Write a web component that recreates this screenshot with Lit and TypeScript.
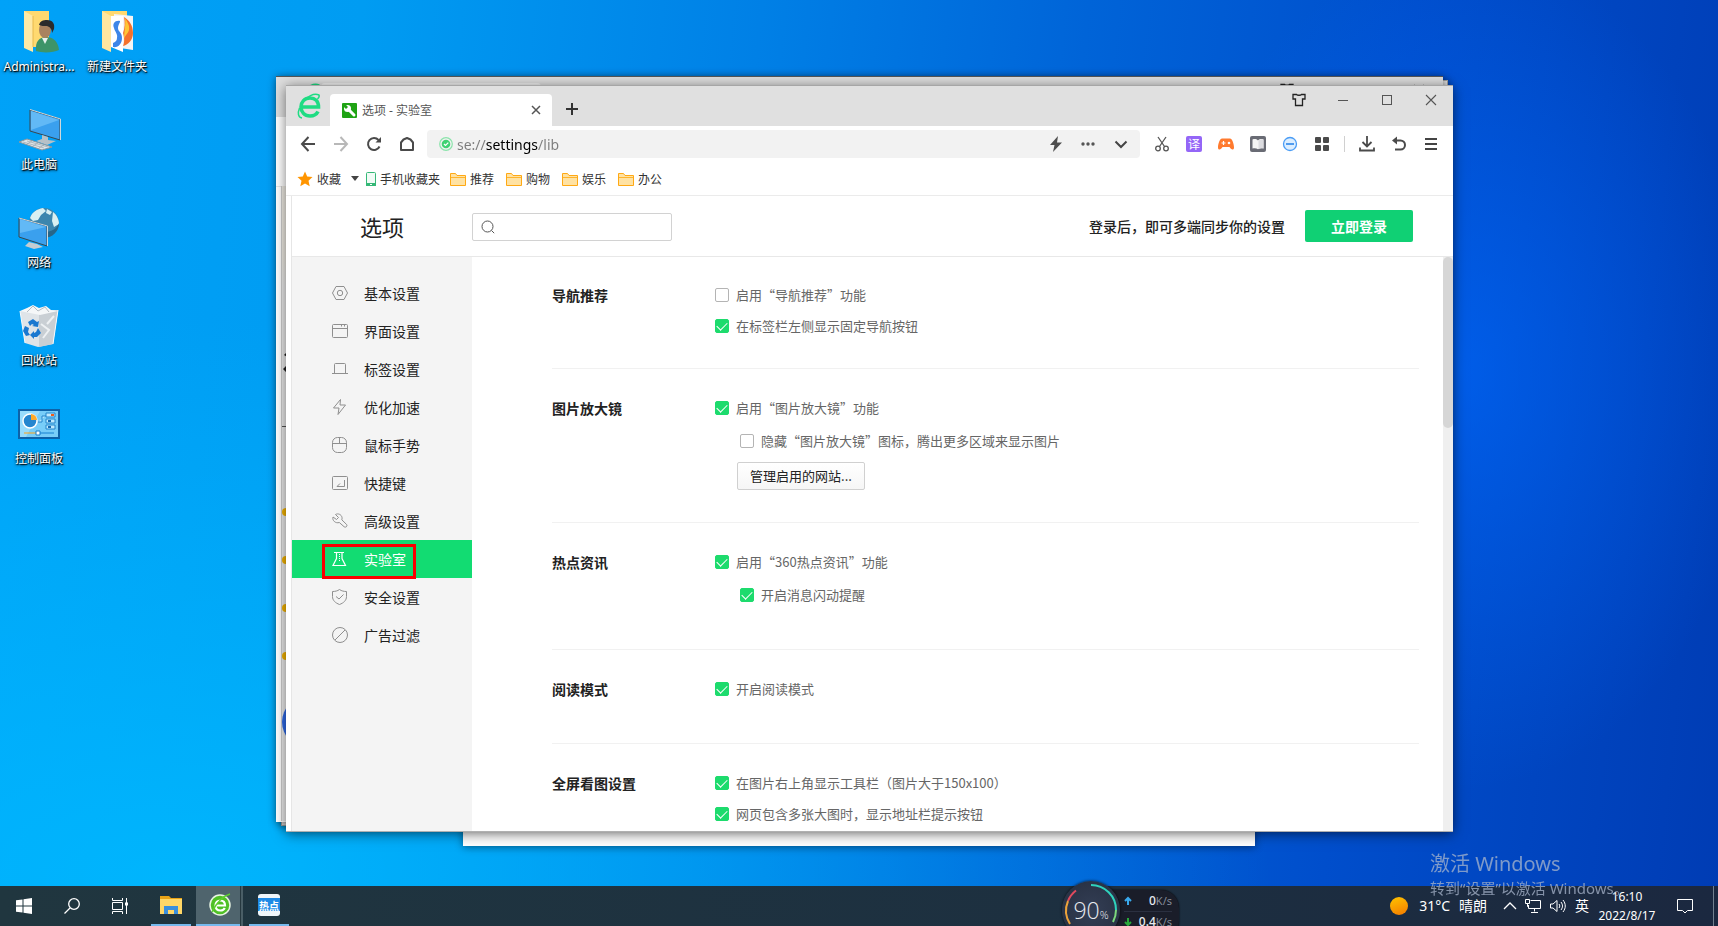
import { LitElement, html, css, svg, nothing } from "lit";
import { customElement } from "lit/decorators.js";
import { classMap } from "lit/directives/class-map.js";

const icon = (w: number, h: number, body: unknown) =>
  html`<svg width=${w} height=${h} viewBox="0 0 ${w} ${h}" fill="none" aria-hidden="true">${body}</svg>`;

/* ---------- desktop shortcuts ---------- */

const userFolder = icon(36, 44, svg`
  <path d="M3 1h25v36H3z" fill="#ffd970"/><path d="M3 1l9 5v36l-9-4z" fill="#ffe9a6"/><path d="M12 6v31" stroke="#e8b84a"/>
  <path d="M15 41c-1-9 3-14 10-14s12 4 13 13c-6 3-17 3-23 1z" fill="#3d9468"/>
  <path d="M21 28l3 6 3-6z" fill="#e8f1ee"/>
  <ellipse cx="24" cy="20" rx="6" ry="8" fill="#a9825f"/>
  <path d="M18 15c1-4 4-5 8-5 6 0 8 4 7 9l-2 4c0-4-2-6-5-7-3 0-6 0-8-1z" fill="#2b2b2c"/>`);

const appsFolder = icon(36, 44, svg`
  <path d="M3 1h25v36H3z" fill="#ffd970"/><path d="M15 4l19 2v34l-19-3z" fill="#f4f4f4"/>
  <path d="M12 6h12v36l-12-5z" fill="#fff"/>
  <path d="M21 11c-5-1-8 3-6 7 1 4 4 6 3 10 0 3-2 4-4 5v4c5 1 9-3 9-9s-4-6-4-10c0-2 1-4 2-6z" fill="#3d86e8"/>
  <path d="M25 7c5 3 9 8 9 16 0 7-5 12-10 13 2-5 1-9 0-13 2-5 2-11 1-16z" fill="#f5712c"/>
  <path d="M26 8c2 4 5 7 4 12-1 4-4 5-5 9 0-6 2-14 1-21z" fill="#ffc534"/>
  <path d="M3 1l9 5v36l-9-4z" fill="#ffe6a0"/>`);

const computer = icon(44, 44, svg`
  <path d="M13 2l30 9v21L13 23z" fill="#3aa0ee" stroke="#38474f"/><path d="M14 3l28 9L14 22z" fill="#62b9f6"/>
  <path d="M13 1.500l30.500 9.500V32" stroke="#cfd8dc" stroke-width="1"/>
  <path d="M25 27l6 2v3l8 1-9 4-11-4 6-2z" fill="#b8c1c7"/>
  <path d="M2 34l8-3 25 8-10 3z" fill="#dfe5e9" stroke="#8b979e"/><path d="M6 34l21 6M10 33l21 6M10 36l5-3M16 38l5-3M22 40l5-3" stroke="#9aa6ad" stroke-width=".7"/>`);

const network = icon(44, 44, svg`
  <circle cx="27" cy="17" r="15" fill="#3c86ae"/><path d="M13 12c2-6 7-9 13-10l3 3-5 4-3 5-5 1zM36 6c4 3 6 8 6 12l-5 3-2-6zM30 3l5 3-2 3-4-2z" fill="#d9f0f2"/>
  <path d="M27 32a15 15 0 0 0 15-15c-2 6-8 9-15 9z" fill="#26668a"/>
  <path d="M2 12l28 8v20L2 31z" fill="#3aa0ee" stroke="#38474f"/><path d="M3 13l26 8L3 27z" fill="#62b9f6"/>
  <path d="M2 12l28.500 8v20" stroke="#cfd8dc"/><path d="M12 36l8 2 6 3-9 2-9-3z" fill="#c4ccd1"/>`);

const recycle = icon(40, 44, svg`
  <path d="M1 7l38-1-5 34-15 3-13-4z" fill="#dfe4e8"/><path d="M20 10l19-4-5 34-14 3z" fill="#c9cfd4"/>
  <path d="M1 7l7-3 6-3 6 3 7-2 5 4 7 1-18 4z" fill="#f5f7f8"/><path d="M8 8l6-6 5 5 7-4 4 5" stroke="#b5bcc2"/>
  <path d="M22 20l8 6-6 8M35 12l-7 8" stroke="#eef1f3" stroke-width="2"/><path d="M1 7l5 32M39 6l-5 34" stroke="#f7fbfd"/>
  <g fill="#1a78d0"><path d="M9 18l5-3 4 3 2-1-1 6-6-1 2-1-2-1-2 2z"/><path d="M6 22l4 2-1 4 2 3-4 1-3-5z"/><path d="M19 24l3 5-4 4h-3v2l-4-4 4-4v2l2-1z"/></g>`);

const controlPanel = icon(42, 32, svg`
  <path d="M0 1h42v30H0z" fill="#0d62a8"/><path d="M2 3h38v26H2z" fill="#78cdf8"/><path d="M2 3h20L8 29H2z" fill="#98dcfc"/>
  <circle cx="12" cy="13" r="7" fill="#2486cf" stroke="#fff" stroke-width="1.500"/><path d="M13 12V6a6 6 0 0 1 6 6z" fill="#ffa928"/>
  <path d="M20 14h4V8h4M28 5h9v4h-9zM28 11h9v4h-9zM28 17h9v4h-9z" stroke="#2384cb" fill="#bfeafe"/><path d="M33 7h3" stroke="#f25c19" stroke-width="2"/><path d="M30 13h3M30 19h3" stroke="#136ab4" stroke-width="2"/>
  <path d="M6 25h13" stroke="#ffa31a" stroke-width="1"/><path d="M20 25h16" stroke="#1680d0" stroke-width="1"/><path d="M18 23h4v4h-4z" fill="#fff" stroke="#177fcb"/>`);

/* ---------- browser chrome ---------- */

const eLogo = icon(24, 26, svg`
  <path d="M4 14h17.500c0-6-3.500-9-8.500-9-5.500 0-9 4-9 9s3.500 9 9 9c4 0 6.500-1.500 8-4.500" stroke="#1fdc83" stroke-width="3.600"/>
  <path d="M5 9.500c5-6.500 12-9.500 17-7.500 .5 1 0 2.500-1.500 4M2.500 15c-2 5-1.500 9.500 2.500 10" stroke="#1fdc83" stroke-width="1.500"/>`);

const wrenchTab = icon(15, 15, svg`
  <rect width="15" height="15" rx="1" fill="#1fa314"/><path d="M6 6l6 6" stroke="#fff" stroke-width="3" stroke-linecap="round"/>
  <circle cx="5.500" cy="5.500" r="3.500" fill="#fff"/><path d="M1 3l2-2 3 3-2 2z" fill="#1fa314"/>`);

const chrome = {
  close: icon(10, 10, svg`<path d="M1 1l8 8M9 1L1 9" stroke="#555" stroke-width="1.500"/>`),
  plus: icon(12, 12, svg`<path d="M6 0v12M0 6h12" stroke="#333" stroke-width="2"/>`),
  back: icon(16, 16, svg`<path d="M8.500 1L2 8l6.500 7M2 8h13" stroke="#4a4a4a" stroke-width="2"/>`),
  forward: icon(16, 16, svg`<path d="M7.500 1L14 8l-6.500 7M14 8H1" stroke="#b8b8b8" stroke-width="2"/>`),
  reload: icon(16, 16, svg`<path d="M13.500 10.500A6 6 0 1 1 12.500 4" stroke="#4a4a4a" stroke-width="2"/><path d="M9.500 6.500H15V1z" fill="#4a4a4a"/>`),
  home: icon(16, 16, svg`<path d="M2 14V6.500L4.500 3.500 8 2l3.500 1.500L14 6.500V14z" stroke="#4a4a4a" stroke-width="2" stroke-linejoin="round"/>`),
  safe: icon(14, 14, svg`<circle cx="7" cy="7" r="6.300" stroke="#8be4ab" stroke-width="1.200"/><circle cx="7" cy="7" r="4.300" fill="#3fd272"/><path d="M5 7l1.500 1.500L9.300 5.600" stroke="#fff" stroke-width="1.200"/>`),
  bolt: icon(12, 16, svg`<path d="M8 0L0 9h4.500L3 16l9-9.500H7z" fill="#4d4d4d"/>`),
  dots: icon(14, 14, svg`<g fill="#555"><circle cx="2" cy="7" r="1.700"/><circle cx="7" cy="7" r="1.700"/><circle cx="12" cy="7" r="1.700"/></g>`),
  chevron: icon(14, 14, svg`<path d="M1.500 4.500L7 10l5.500-5.500" stroke="#444" stroke-width="2"/>`),
};

const toolIcons: [string, unknown][] = [
  ["截图", icon(16, 16, svg`<path d="M4 1l6.500 9.500M12 1L5.500 10.500" stroke="#555" stroke-width="1.300"/><circle cx="4" cy="12.500" r="2.300" stroke="#555" stroke-width="1.300"/><circle cx="12" cy="12.500" r="2.300" stroke="#555" stroke-width="1.300"/>`)],
  ["翻译", html`<span class="translate">译</span>`],
  ["游戏", icon(16, 16, svg`<path d="M4 2.500h8c2 0 4 5 4 9 0 3-3 2.500-4.500-.5h-7C3 14 0 14.500 0 11.500c0-4 2-9 4-9z" fill="#ff7a2e"/><path d="M5.500 5v4M3.500 7h4" stroke="#fff" stroke-width="1.200"/><circle cx="11" cy="7" r="1.300" fill="#fff"/>`)],
  ["阅读", icon(16, 16, svg`<rect width="16" height="16" rx="2" fill="#696b74"/><path d="M2.500 3.500c2-.8 4-.5 5.500 1 1.500-1.500 3.500-1.800 5.500-1v9c-2-.6-4-.4-5.500.7-1.500-1.100-3.500-1.300-5.500-.7z" fill="#f4f4f4"/><path d="M8.500 5v8c1.300-.8 3-1.200 5-.5v-9c-2-.7-3.700-.2-5 1.500z" fill="#dcdce0"/>`)],
  ["拦截", icon(16, 16, svg`<circle cx="8" cy="8" r="6.500" fill="#dceeff" stroke="#4a9cf5" stroke-width="1.300"/><path d="M4 8h8" stroke="#2e86ea" stroke-width="1.600"/>`)],
  ["扩展", icon(16, 16, svg`<g fill="#4a4a4a"><rect x="1" y="1" width="6" height="6" rx="1"/><rect x="9" y="1" width="6" height="6" rx="1"/><rect x="1" y="9" width="6" height="6" rx="1"/><rect x="9" y="9" width="6" height="6" rx="1"/></g>`)],
];

const endIcons: [string, unknown][] = [
  ["下载", icon(16, 16, svg`<path d="M8 0v10M3.500 6L8 10.500 12.500 6M1 11.500v3h14v-3" stroke="#4a4a4a" stroke-width="1.800"/>`)],
  ["恢复", icon(16, 16, svg`<path d="M3 4.500h6.500a4.500 4.500 0 0 1 0 9H4" stroke="#4a4a4a" stroke-width="2"/><path d="M6 .5v8L1 4.500z" fill="#4a4a4a"/>`)],
  ["菜单", icon(16, 16, svg`<path d="M2 3h12M2 8h12M2 13h12" stroke="#444" stroke-width="2"/>`)],
];

const windowIcons: [string, unknown][] = [
  ["皮肤", icon(14, 14, svg`<path d="M1 1.500h3.500c.8 1 4.200 1 5 0H13V6h-2.500v6.500h-7V6H1z" stroke="#222" stroke-width="1.300"/>`)],
  ["最小化", icon(14, 14, svg`<path d="M2 7.500h10" stroke="#555"/>`)],
  ["最大化", icon(14, 14, svg`<rect x="2.500" y="2.500" width="9" height="9" stroke="#555"/>`)],
  ["关闭", icon(14, 14, svg`<path d="M2 2l10 10M12 2L2 12" stroke="#555" stroke-width="1.100"/>`)],
];

const star = icon(16, 16, svg`<path d="M8 .5l2.200 5 5.300.5-4 3.700 1.200 5.500L8 12.400l-4.700 2.800 1.200-5.500L.5 6l5.300-.5z" fill="#ff9500"/>`);
const phone = icon(12, 16, svg`<rect x="1.500" y="1.500" width="9" height="13" rx="1" stroke="#35b877" fill="#f1fbf6"/><path d="M1 12h10v3H1z" fill="#35b877"/><path d="M5 13.500h2" stroke="#fff"/>`);
const folder = icon(16, 14, svg`<path d="M.5 1.500h5l1.500 2h8.500v10H.5z" fill="#ffe2a3" stroke="#ffa914"/><path d="M1 5.500h14" stroke="#ffb52e"/>`);
const magnifier = icon(14, 14, svg`<circle cx="6.500" cy="6.500" r="5.500" stroke="#555"/><path d="M10.500 10.500l2.700 2.700" stroke="#555"/>`);

/* ---------- settings menu ---------- */

const g = "#8f8f8f";
const menu: { label: string; glyph: unknown; active?: boolean }[] = [
  { label: "基本设置", glyph: icon(18, 18, svg`<path d="M5 2.500h8L16.500 9 13 15.500H5L1.500 9z" stroke=${g} stroke-linejoin="round"/><circle cx="9" cy="9" r="2.700" stroke=${g}/>`) },
  { label: "界面设置", glyph: icon(18, 18, svg`<rect x="1.500" y="2.500" width="15" height="13" rx="1" stroke=${g}/><path d="M1.500 6.500h15M10.500 2.500v2M13.500 2.500v2" stroke=${g}/>`) },
  { label: "标签设置", glyph: icon(18, 18, svg`<path d="M1 13.500h16M3.500 13.500v-9q0-1 1-1h9q1 0 1 1v9" stroke=${g}/>`) },
  { label: "优化加速", glyph: icon(18, 18, svg`<path d="M9.500 1.500L2.500 10H8l-1 6.500L14.500 7H9z" stroke=${g} stroke-linejoin="round"/>`) },
  { label: "鼠标手势", glyph: icon(18, 18, svg`<rect x="1.500" y="1.500" width="14" height="15" rx="5" stroke=${g}/><path d="M1.500 7.500h14M8.500 1.500v6" stroke=${g}/>`) },
  { label: "快捷键", glyph: icon(18, 18, svg`<rect x="1.500" y="2.500" width="15" height="13" rx="1" stroke=${g}/><path d="M13.500 6v6.500H6l3-3" stroke=${g}/>`) },
  { label: "高级设置", glyph: icon(18, 18, svg`<path d="M4.500 2.500C7 1 10.500 2.500 11 5.500c.2 1 0 1.700-.2 2.300l4.900 4.800c1 1.500-.9 3.300-2.500 2.200L8.300 10.500C4.500 11.700 1 8.500 2 5l3.500 2.500 2-2z" stroke=${g} stroke-linejoin="round"/>`) },
  { label: "实验室", active: true, glyph: icon(18, 18, svg`<path d="M3 2.500h10M5.500 2.500v6L2 15.500h12.500L11 8.500v-6" stroke="#fff" stroke-width="1.200"/><path d="M8.500 4v8" stroke="#fff" stroke-dasharray="1 1"/>`) },
  { label: "安全设置", glyph: icon(18, 18, svg`<path d="M8.500 1.500c2 1.500 4.500 2 7 2v5c0 4-3 6.500-7 8-4-1.500-7-4-7-8v-5c2.500 0 5-.5 7-2z" stroke=${g}/><path d="M5 8.500L8 11l4.500-4.500" stroke=${g}/>`) },
  { label: "广告过滤", glyph: icon(18, 18, svg`<circle cx="9" cy="9" r="7.500" stroke=${g}/><path d="M14 4L4 14" stroke=${g}/>`) },
];

interface Row { label: string; on: boolean; sub?: boolean }
const sections: { title: string; rows: Row[]; button?: string; tight?: boolean }[] = [
  { title: "导航推荐", tight: true, rows: [{ label: "启用“导航推荐”功能", on: false }, { label: "在标签栏左侧显示固定导航按钮", on: true }] },
  { title: "图片放大镜", tight: true, rows: [{ label: "启用“图片放大镜”功能", on: true }, { label: "隐藏“图片放大镜”图标，腾出更多区域来显示图片", on: false, sub: true }], button: "管理启用的网站..." },
  { title: "热点资讯", rows: [{ label: "启用“360热点资讯”功能", on: true }, { label: "开启消息闪动提醒", on: true, sub: true }] },
  { title: "阅读模式", rows: [{ label: "开启阅读模式", on: true }] },
  { title: "全屏看图设置", rows: [{ label: "在图片右上角显示工具栏（图片大于150x100）", on: true }, { label: "网页包含多张大图时，显示地址栏提示按钮", on: true }] },
];

const reset = css`
  * { box-sizing: border-box; }
  svg { display: block; flex: none; overflow: visible; }
  button { border: 0; padding: 0; background: none; font: inherit; color: inherit; display: flex; align-items: center; justify-content: center; }
  a { color: inherit; text-decoration: none; }
`;

@customElement("settings-page")
export class SettingsPage extends LitElement {
  static styles = [reset, css`
    :host { display: flex; flex-direction: column; flex: 1; min-height: 0; margin-left: 5px; border-left: 1px solid #e6e6e6; background: #fff; }
    .head { display: flex; align-items: center; height: 61px; flex: none; border-bottom: 1px solid #e8e8e8; padding-right: 40px; }
    h1 { margin: 0; width: 180px; padding-left: 68px; font-size: 22px; line-height: 30px; font-weight: 400; color: #222; }
    .search { display: flex; align-items: center; width: 200px; height: 28px; border: 1px solid #d2d2d2; border-radius: 2px; padding: 0 8px; gap: 8px; margin-top: 2px; }
    .search input { flex: 1; min-width: 0; border: 0; outline: 0; font: inherit; background: none; }
    .hint { margin-left: auto; font-size: 14px; font-weight: 500; color: #222; }
    .login { margin-left: 20px; width: 108px; height: 32px; border-radius: 2px; background: #10d074; color: #fff; font-size: 14px; font-weight: 700; }
    .body { display: flex; flex: 1; min-height: 0; }
    nav { width: 180px; flex: none; background: #f4f4f4; padding-top: 17px; }
    .item { display: flex; align-items: center; gap: 15px; height: 38px; padding-left: 39px; font-size: 14px; color: #222; position: relative; }
    .active { background: #12dc72; color: #fff; }
    .mark { position: absolute; left: 30px; top: 4px; width: 94px; height: 35px; border: 3px solid #fb0000; z-index: 1; }
    main { flex: 1; min-width: 0; overflow: hidden; padding: 0 24px 0 80px; }
    section { display: flex; padding: 29px 0 44px; border-top: 1px solid #f1f1f1; }
    section:first-child { border-top: 0; padding-top: 28px; }
    section.tight { padding-bottom: 32px; }
    h2 { margin: 0; width: 163px; flex: none; font-size: 14px; line-height: 20px; font-weight: 700; color: #222; }
    .rows { display: flex; flex-direction: column; align-items: flex-start; gap: 11px; }
    label { display: flex; align-items: center; gap: 7px; font-size: 13px; line-height: 20px; color: #666; white-space: nowrap; }
    .sub { margin: 2px 0 0 25px; }
    input[type="checkbox"] { appearance: none; margin: 0; width: 14px; height: 14px; border: 1px solid #b4b4b4; border-radius: 2px; background: #fff; display: grid; place-items: center; }
    input[type="checkbox"]:checked { background: #1ddb6d; border-color: #1ddb6d; }
    input[type="checkbox"]:checked::after { content: ""; width: 9px; height: 5px; margin-bottom: 3px; border: solid #fff; border-width: 0 0 1px 1px; rotate: -45deg; }
    .manage { margin-left: 22px; width: 128px; height: 28px; border: 1px solid #d0d0d0; border-radius: 2px; background: linear-gradient(#fff, #f6f6f6); font-size: 13px; color: #222; }
    .track { width: 10px; flex: none; background: #efefef; }
    .thumb { height: 171px; border-radius: 5px; background: #d6d6d6; }
  `];

  render() {
    return html`
      <div class="head">
        <h1>选项</h1>
        <label class="search">${magnifier}<input type="text" aria-label="搜索" /></label>
        <span class="hint">登录后，即可多端同步你的设置</span>
        <button class="login">立即登录</button>
      </div>
      <div class="body">
        <nav>
          ${menu.map((m) => html`<a href="#" class=${classMap({ item: true, active: !!m.active })}>${m.glyph}${m.label}${m.active ? html`<i class="mark"></i>` : nothing}</a>`)}
        </nav>
        <main>
          ${sections.map((s) => html`
            <section class=${classMap({ tight: !!s.tight })}>
              <h2>${s.title}</h2>
              <div class="rows">
                ${s.rows.map((r) => html`<label class=${classMap({ sub: !!r.sub })}><input type="checkbox" ?checked=${r.on} />${r.label}</label>`)}
                ${s.button ? html`<button class="manage">${s.button}</button>` : nothing}
              </div>
            </section>`)}
        </main>
        <div class="track"><div class="thumb"></div></div>
      </div>`;
  }
}

@customElement("browser-window")
export class BrowserWindow extends LitElement {
  static styles = [reset, css`
    :host { display: flex; flex-direction: column; background: #fff; overflow: hidden; color: #444; }
    .title { display: flex; height: 41px; flex: none; background: #e0e0e0; border-top: 1px solid #a6a6a6; }
    .logo { width: 44px; padding: 7px 0 0 11px; }
    .tab { display: flex; align-items: center; gap: 5px; width: 222px; height: 32px; margin-top: 8px; padding: 0 11px 0 12px; border-radius: 4px 4px 0 0; background: #fff; font: 12px "Noto Sans", "Noto Sans CJK SC", sans-serif; color: #555; }
    .tab button { margin-left: auto; }
    .add { width: 40px; height: 32px; margin-top: 7px; }
    .controls { display: flex; margin-left: auto; gap: 30px; height: 28px; padding-right: 15px; }
    .bar { display: flex; align-items: center; height: 36px; flex: none; padding: 0 14px; }
    .nav { display: flex; gap: 17px; }
    .address { display: flex; align-items: center; flex: 1; height: 28px; margin: 0 14px 0 12px; padding: 0 12px; border-radius: 4px; background: #f2f2f2; }
    .address input { flex: 1; min-width: 0; margin-left: 4px; padding: 0; border: 0; outline: 0; height: 24px; font: 14px "Noto Sans", sans-serif; color: transparent; background: linear-gradient(90deg, #7c7c7c 29px, #000 29px, #000 81px, #7c7c7c 81px); background-clip: text; -webkit-background-clip: text; }
    .quick { display: flex; gap: 19px; }
    .tools { display: flex; align-items: center; gap: 16px; }
    .sep { width: 1px; height: 16px; margin: 0 -2px; background: #d0d0d0; }
    .translate { width: 16px; height: 16px; border-radius: 2px; background: #9466f7; color: #fff; font-size: 12px; line-height: 15px; text-align: center; }
    .marks { display: flex; align-items: center; height: 34px; flex: none; padding-left: 11px; border-bottom: 1px solid #ebebeb; font-size: 12px; color: #333; }
    .marks a { display: flex; align-items: center; gap: 4px; margin-right: 12px; }
    .marks .fav { margin-right: 10px; }
    .caret { border: solid transparent; border-width: 5px 4px 0; border-top-color: #444; margin-right: 6px; }
    .marks .phone { gap: 3px; margin-right: 10px; }
  `];

  render() {
    const button = ([label, glyph]: [string, unknown]) => html`<button aria-label=${label}>${glyph}</button>`;
    return html`
      <div class="title">
        <div class="logo">${eLogo}</div>
        <div class="tab">${wrenchTab}<span>选项 - 实验室</span>${button(["关闭标签", chrome.close])}</div>
        <button class="add" aria-label="新标签">${chrome.plus}</button>
        <div class="controls">${windowIcons.map(button)}</div>
      </div>
      <div class="bar">
        <div class="nav">
          ${button(["后退", chrome.back])}${button(["前进", chrome.forward])}${button(["刷新", chrome.reload])}${button(["主页", chrome.home])}
        </div>
        <div class="address">
          ${chrome.safe}
          <input type="text" aria-label="地址" value="se://settings/lib" />
          <div class="quick">${button(["加速", chrome.bolt])}${button(["更多", chrome.dots])}${button(["展开", chrome.chevron])}</div>
        </div>
        <div class="tools">${toolIcons.map(button)}<span class="sep"></span>${endIcons.map(button)}</div>
      </div>
      <div class="marks">
        <a href="#" class="fav">${star}收藏</a><span class="caret"></span>
        <a href="#" class="phone">${phone}手机收藏夹</a>
        ${["推荐", "购物", "娱乐", "办公"].map((t) => html`<a href="#">${folder}${t}</a>`)}
      </div>
      <settings-page></settings-page>`;
  }
}

const shortcuts: [string, unknown][][] = [
  [["Administra...", userFolder], ["此电脑", computer], ["网络", network], ["回收站", recycle], ["控制面板", controlPanel]],
  [["新建文件夹", appsFolder]],
];

@customElement("app-root")
export class AppRoot extends LitElement {
  static styles = [reset, css`
    :host {
      display: flex; flex-direction: column; height: 100vh; overflow: hidden; position: relative;
      font-family: "Noto Sans CJK SC", sans-serif; font-size: 12px; line-height: 18px;
      background:
        radial-gradient(ellipse 300px 420px at 85% 40%, #0068fca0, transparent),
        radial-gradient(ellipse 1100px 560px at 10% 95%, #00baffd0, transparent),
        linear-gradient(96deg, #00a2f8 0, #009cf2 20%, #0080e6 42%, #0064d8 60%, #004ecc 78%, #003cb4 100%);
    }
    .desktop { position: relative; flex: 1; display: flex; min-height: 0; }
    .column { display: flex; flex-direction: column; width: 78px; padding-top: 8px; }
    .shortcut { display: flex; flex-direction: column; align-items: center; gap: 2px; height: 98px; color: #fff; text-shadow: 1px 1px 1px #000, 0 1px 3px #000; white-space: nowrap; }
    .picture { display: grid; place-items: center; height: 48px; flex: none; }
    .latin { font-family: "Noto Sans", "Noto Sans CJK SC", sans-serif; }
    .win { position: absolute; box-shadow: 0 1px 8px #0007; }
    .lower { left: 463px; right: 463px; top: 400px; bottom: 40px; background: #fff; }
    .far { left: 281px; right: 270px; top: 80px; bottom: 60px; background: #f0f0f0; border: 1px solid #aaa; }
    .mid { left: 276px; right: 275px; top: 76px; bottom: 64px; background: linear-gradient(#dedede 40px, #fff 40px, #fff 109px, #e6e6e6 109px, #e6e6e6 110px, #fff 110px); border-top: 1px solid #555; }
    .strip { display: flex; height: 40px; padding: 6px 17px 0 21px; }
    .ghost { width: 220px; height: 32px; border-radius: 4px 4px 0 0; background: #f0f0f0; }
    .ghosts { display: flex; gap: 30px; margin-left: auto; }
    .edge { position: absolute; left: 281px; top: 186px; width: 5px; bottom: 65px; background: linear-gradient(#efece4 70px, #ececec 100px); border-left: 1px solid #ccc; overflow: hidden; }
    .main { left: 286px; right: 265px; top: 85px; bottom: 54px; border-bottom: 1px solid #b0b0b0; box-shadow: 0 2px 12px #0008; }
    .activate { position: absolute; left: 1430px; top: 850px; color: #a9b6cc; opacity: .75; z-index: 2; white-space: nowrap; pointer-events: none; font-size: 15px; line-height: 20px; }
    .activate b { display: block; font-weight: 400; font-size: 20px; line-height: 28px; }
    .taskbar { display: flex; height: 40px; flex: none; background: linear-gradient(90deg, #20363f, #1d3040 60%, #1b2840); color: #fff; }
    .taskbar button { width: 48px; height: 40px; }
    .taskbar .open { position: relative; width: 40px; margin-left: 7px; border-bottom: 2px solid #76b9ed; }
    .taskbar .current { background: #4f646d; width: 44px; margin-left: 5px; margin-right: 2px; padding-left: 3px; border-bottom: 2px solid #76b9ed; box-shadow: 1px 0 #26383f, 3px 0 #4a5e66; }
    .hot { display: grid; align-content: center; width: 22px; height: 22px; border-radius: 3px; background: linear-gradient(#f0f6fa 4px, #1f8ae6 4px, #1f8ae6 17px, #f0f6fa 17px); font-size: 10px; line-height: 13px; font-weight: 700; }
    .tray { display: flex; align-items: center; margin-left: auto; font-size: 14px; font-family: "Noto Sans", "Noto Sans CJK SC", sans-serif; }
    .sun { width: 18px; height: 18px; border-radius: 50%; background: linear-gradient(160deg, #ffc400, #f47a00); margin-right: 11px; }
    .weather { display: flex; gap: 9px; margin-right: 17px; }
    .status { display: flex; align-items: center; gap: 9px; margin-right: 8px; }
    .clock { text-align: center; font-size: 12px; line-height: 19px; width: 60px; margin-right: 20px; }
    .show { width: 1px; height: 40px; margin: 0 4px 0 20px; background: #71808f; }
    .meter { position: absolute; left: 1062px; top: 881px; height: 58px; display: flex; color: #e8ebf0; font-family: "Noto Sans", sans-serif; }
    .dial { position: relative; z-index: 1; display: grid; place-items: center; width: 58px; height: 58px; border-radius: 50%; background: radial-gradient(#333e55, #262e3f); box-shadow: 0 0 3px #000c; }
    .dial svg { grid-area: 1 / 1; }
    .dial span { grid-area: 1 / 1; font: 300 23px "Open Sans", sans-serif; }
    .dial small { font-size: 11px; }
    .speed { width: 88px; margin: 9px 0 0 -29px; padding: 0 7px 0 33px; border-radius: 18px; background: #1a1d29; box-shadow: 0 0 2px #000; }
    .speed div { display: flex; align-items: center; height: 21px; font-size: 12px; }
    .speed div + div { border-top: 1px solid #2b3040; }
    .speed b { margin-left: auto; font-weight: 500; }
    .speed i { font-style: normal; font-size: 11px; color: #858b98; }
  `];

  render() {
    return html`
      <div class="desktop">
        ${shortcuts.map((column) => html`
          <div class="column">
            ${column.map(([label, glyph]) => html`<div class="shortcut"><div class="picture">${glyph}</div><span class="latin">${label}</span></div>`)}
          </div>`)}
        <div class="win lower"></div>
        <div class="win far"></div>
        <div class="win mid">
          <div class="strip">${eLogo}<div class="ghost"></div><div class="ghosts">${windowIcons.map(([, glyph]) => glyph)}</div></div>
        </div>
        <div class="edge">
          ${icon(5, 636, svg`
            <path d="M5 166l-3 3 3 2zM5 179l-4 4 4 4z" fill="#222"/><path d="M0 240.500h5" stroke="#555"/>
            <g fill="#f5b400"><circle cx="4" cy="326" r="4"/><circle cx="4" cy="374" r="4"/><circle cx="4" cy="422" r="4"/><circle cx="4" cy="470" r="4"/></g>
            <circle cx="25" cy="536" r="25" fill="#2f6bea"/>`)}
        </div>
        <browser-window class="win main"></browser-window>
      </div>
      <div class="activate latin"><b>激活 Windows</b>转到“设置”以激活 Windows。</div>
      <div class="taskbar">
        <button aria-label="开始">${icon(16, 16, svg`<path d="M0 2.300l6.500-.9v6H0zM7.500 1.200L16 0v7.500H7.500zM0 8.500h6.500v6L0 13.700zM7.500 8.500H16V16l-8.500-1.200z" fill="#fff"/>`)}</button>
        <button aria-label="搜索">${icon(16, 16, svg`<circle cx="10" cy="6" r="5.300" stroke="#fff" stroke-width="1.300"/><path d="M6 10L.5 15.500" stroke="#fff" stroke-width="1.300"/>`)}</button>
        <button aria-label="任务视图">${icon(16, 16, svg`<path d="M.5 0v2.500h10V0M.5 4.500h10v7H.5zM.5 16v-2.500h10V16M14.500 0v16" stroke="#fff"/><path d="M13 4.500h3v3h-3z" fill="#fff"/>`)}</button>
        <button class="open" aria-label="文件资源管理器">${icon(22, 18, svg`<path d="M0 0h9l2 2h11v16H0z" fill="#e8a317"/><path d="M0 3h22v15H0z" fill="#ffd767"/><path d="M4 10h14v8h-4v-4H8v4H4z" fill="#3a8fdc"/>`)}</button>
        <button class="current" aria-label="360安全浏览器">${icon(22, 22, svg`<circle cx="11" cy="11" r="10" fill="#4fc026" stroke="#e9f5e4" stroke-width="1.500"/><path d="M6 11.500h10c0-3.500-2-5-4.700-5S6.500 8.500 6.500 11.500s2 5 5 5c2 0 3.500-1 4.300-2.500" stroke="#fff" stroke-width="2.200"/><path d="M3 18C8 8 14 2 21 0" stroke="#5dcf2f" stroke-width="1.500"/>`)}</button>
        <button class="open" aria-label="热点资讯"><span class="hot">热点</span></button>
        <div class="tray">
          <span class="sun"></span>
          <span class="weather"><span>31°C</span><span>晴朗</span></span>
          <span class="status">
            ${icon(12, 12, svg`<path d="M0 9l6-6 6 6" stroke="#fff" stroke-width="1.300"/>`)}
            ${icon(16, 14, svg`<path d="M5.500 1.500h10v8h-12V6M9.500 9.500v3M6 13.500h7M.5.500h4v4h-4zM2.500 4.500v3h1" stroke="#fff"/>`)}
            ${icon(16, 14, svg`<path d="M.5 5v4h2.500l4 3.500v-11L3 5z" stroke="#fff"/><path d="M9 5c1 1.500 1 2.500 0 4M11 3c2 3 2 5 0 8M13 1c3 4 3 8 0 12" stroke="#fff"/>`)}
            <span>英</span>
          </span>
          <span class="clock">16:10<br />2022/8/17</span>
          ${icon(16, 16, svg`<path d="M.5 1.500h15v11h-5L8 15l-2.500-2.500h-5z" stroke="#fff"/>`)}
          <span class="show"></span>
        </div>
      </div>
      <div class="meter">
        <div class="dial">
          ${icon(58, 58, svg`<path d="M29 4a25 25 0 0 1 25 25" stroke="#2fd2bd" stroke-width="2"/><path d="M54 29a25 25 0 0 1-3 12" stroke="#7cd87d" stroke-width="2"/><path d="M14 9.500A25 25 0 0 0 6 20" stroke="#e04a5e" stroke-width="2"/><path d="M6 20a25 25 0 0 0 2 23" stroke="#eda33a" stroke-width="2"/>`)}
          <span>90<small>%</small></span>
        </div>
        <div class="speed">
          <div>${icon(8, 8, svg`<path d="M4 8V1.500M1 4l3-3 3 3" stroke="#39a9ec" stroke-width="2"/>`)}<b>0</b><i>K/s</i></div>
          <div>${icon(8, 8, svg`<path d="M4 0v6.500M1 4l3 3 3-3" stroke="#28a93a" stroke-width="2"/>`)}<b>0.4</b><i>K/s</i></div>
        </div>
      </div>`;
  }
}
